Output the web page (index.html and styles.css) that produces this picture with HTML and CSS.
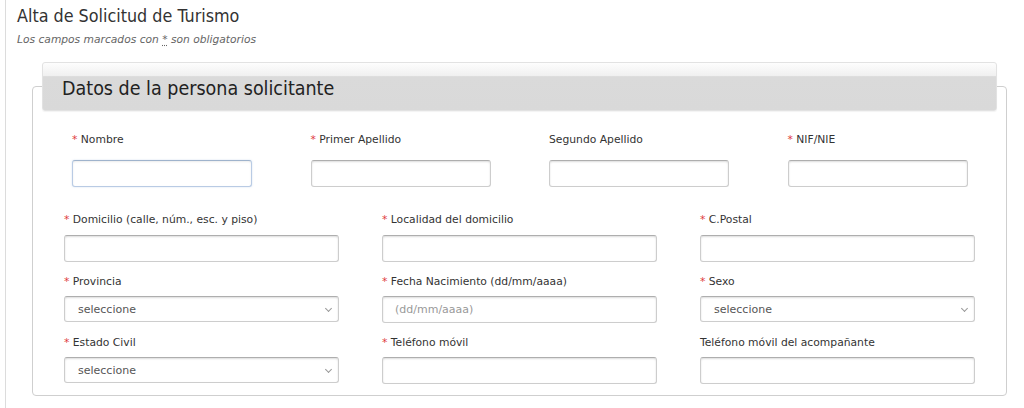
FILE: index.html
```html
<!DOCTYPE html>
<html lang="es">
<head>
<meta charset="utf-8">
<title>Alta de Solicitud de Turismo</title>
<link rel="stylesheet" href="styles.css">
</head>
<body>
<div class="page">
  <h1 class="title">Alta de Solicitud de Turismo</h1>
  <p class="note">Los campos marcados con <abbr class="req-abbr">*</abbr> son obligatorios</p>

  <fieldset class="box">
    <legend class="box-legend">Datos de la persona solicitante</legend>

    <div class="row row-4">
      <div class="field">
        <label class="lbl"><span class="ast">*</span> Nombre</label>
        <input class="inp inp-focus" type="text">
      </div>
      <div class="field">
        <label class="lbl"><span class="ast">*</span> Primer Apellido</label>
        <input class="inp" type="text">
      </div>
      <div class="field">
        <label class="lbl">Segundo Apellido</label>
        <input class="inp" type="text">
      </div>
      <div class="field">
        <label class="lbl"><span class="ast">*</span> NIF/NIE</label>
        <input class="inp" type="text">
      </div>
    </div>

    <div class="row row-3 row-a">
      <div class="field">
        <label class="lbl"><span class="ast">*</span> Domicilio (calle, núm., esc. y piso)</label>
        <input class="inp" type="text">
      </div>
      <div class="field">
        <label class="lbl"><span class="ast">*</span> Localidad del domicilio</label>
        <input class="inp" type="text">
      </div>
      <div class="field">
        <label class="lbl"><span class="ast">*</span> C.Postal</label>
        <input class="inp" type="text">
      </div>
    </div>

    <div class="row row-3 row-b">
      <div class="field">
        <label class="lbl"><span class="ast">*</span> Provincia</label>
        <span class="sel-wrap"><select class="sel"><option>seleccione</option></select></span>
      </div>
      <div class="field">
        <label class="lbl"><span class="ast">*</span> Fecha Nacimiento (dd/mm/aaaa)</label>
        <input class="inp" type="text" placeholder="(dd/mm/aaaa)">
      </div>
      <div class="field">
        <label class="lbl"><span class="ast">*</span> Sexo</label>
        <span class="sel-wrap"><select class="sel"><option>seleccione</option></select></span>
      </div>
    </div>

    <div class="row row-3 row-b">
      <div class="field">
        <label class="lbl"><span class="ast">*</span> Estado Civil</label>
        <span class="sel-wrap"><select class="sel"><option>seleccione</option></select></span>
      </div>
      <div class="field">
        <label class="lbl"><span class="ast">*</span> Teléfono móvil</label>
        <input class="inp" type="text">
      </div>
      <div class="field">
        <label class="lbl">Teléfono móvil del acompañante</label>
        <input class="inp" type="text">
      </div>
    </div>
  </fieldset>
</div>
</body>
</html>
```

FILE: styles.css
```css
* { box-sizing: border-box; }

html, body {
  margin: 0;
  padding: 0;
  background: #fff;
}

body {
  font-family: "DejaVu Sans", Verdana, sans-serif;
  color: #333;
  overflow: hidden;
}

.page {
  margin-left: 5px;
  border-left: 1px solid #dcdcdc;
  padding: 6px 0 0 11px;
  min-height: 408px;
}

.title {
  margin: 0;
  font-family: "DejaVu Sans Condensed", "DejaVu Sans", sans-serif;
  font-weight: normal;
  font-size: 17.8px;
  line-height: 20px;
  color: #333;
}

.note {
  margin: 7px 0 0 0;
  font-size: 10.7px;
  line-height: 14px;
  font-style: italic;
  color: #666;
}

.req-abbr {
  text-decoration: underline dotted;
  text-underline-offset: 2px;
}

.box {
  margin: 15px 0 0 15px;
  width: 975px;
  border: 1px solid #cfcfcf;
  border-radius: 4px;
  padding: 0 9px 11px 9px;
}

.box-legend {
  width: 955px;
  height: 49px;
  padding: 14px 0 0 19px;
  border: 1px solid #e2e2e2;
  border-radius: 3px;
  background: linear-gradient(#fdfdfd 0, #f0f0f0 27%, #dadada 29%, #d9d9d9 100%);
  font-family: "DejaVu Sans Condensed", "DejaVu Sans", sans-serif;
  font-size: 19.5px;
  line-height: 24px;
  color: #222;
  box-shadow: 0 1px 1px rgba(0,0,0,0.05);
}

.row {
  display: grid;
}

.row-4 {
  grid-template-columns: repeat(4, 180px);
  column-gap: 58.5px;
  margin: 21px 0 0 30px;
}

.row-3 {
  grid-template-columns: repeat(3, 275px);
  column-gap: 43px;
  margin-left: 22px;
}

.row-a { margin-top: 25px; }
.row-b { margin-top: 12px; }

.field {
  display: flex;
  flex-direction: column;
}

.lbl {
  font-size: 10.75px;
  line-height: 16px;
  color: #333;
  white-space: nowrap;
}

.row-4 .lbl { margin-bottom: 12px; }
.row-3 .lbl { margin-bottom: 7px; }
.row-b .lbl { margin-bottom: 6px; }

.ast {
  color: #e0393e;
}

.inp {
  display: block;
  width: 100%;
  height: 27px;
  margin: 0;
  padding: 0 12px;
  border: 1px solid #cdcdcd;
  border-top-color: #aeaeae;
  border-radius: 3px;
  background: #fff;
  box-shadow: inset 0 1px 2px rgba(0,0,0,0.14);
  font-family: "DejaVu Sans", Verdana, sans-serif;
  font-size: 11px;
  color: #333;
  outline: none;
}

.inp::placeholder {
  color: #999;
}

.inp-focus {
  border-color: #b9cbe4;
  border-top-color: #9fb3cc;
  box-shadow: inset 0 1px 2px rgba(0,0,0,0.08), 0 0 2px rgba(120,160,210,0.35);
}

.sel-wrap {
  position: relative;
  display: block;
}

.sel-wrap::after {
  content: "";
  position: absolute;
  right: 8px;
  top: 10px;
  width: 4px;
  height: 4px;
  border-right: 1px solid #999;
  border-bottom: 1px solid #999;
  transform: rotate(45deg);
  pointer-events: none;
}

.sel {
  display: block;
  width: 100%;
  height: 26px;
  margin: 0;
  padding: 0 12px 0 13px;
  -webkit-appearance: none;
  appearance: none;
  border: 1px solid #cdcdcd;
  border-top-color: #aeaeae;
  border-radius: 3px;
  background: #fff;
  box-shadow: inset 0 1px 2px rgba(0,0,0,0.14);
  font-family: "DejaVu Sans", Verdana, sans-serif;
  font-size: 11px;
  color: #555;
  outline: none;
}
```
